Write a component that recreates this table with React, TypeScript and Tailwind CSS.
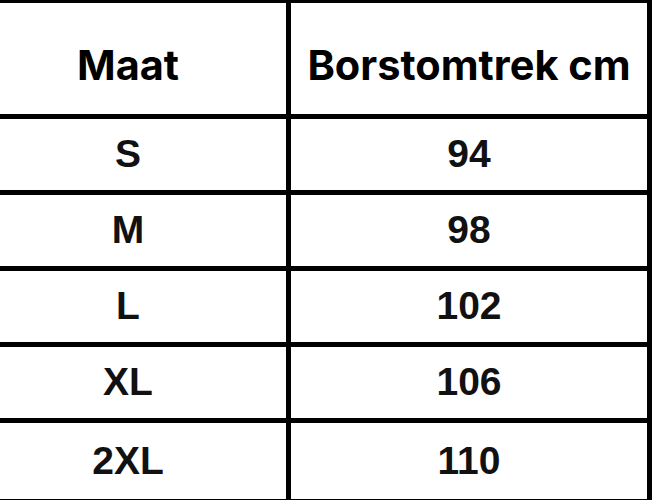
import React from "react";

// Size chart rows
const rows = [
  { size: "S", chest: "94" },
  { size: "M", chest: "98" },
  { size: "L", chest: "102" },
  { size: "XL", chest: "106" },
  { size: "2XL", chest: "110" },
];

const App: React.FC = () => {
  return (
    <div className="w-[654px] h-[500px] bg-white overflow-hidden">
      <div className="w-[652px] border-t-[3px] border-r-[5px] border-b-[5px] border-black">
        {/* Header */}
        <div className="flex h-[116px] border-b-[5px] border-black font-[Inter] font-bold text-[41.5px] text-black">
          <div className="w-[291px] border-r-[5px] border-black flex items-center justify-center pr-[30px] pt-[14px]">
            Maat
          </div>
          <div className="flex-1 flex items-center justify-center pt-[14px]">
            Borstomtrek cm
          </div>
        </div>

        {/* Body rows */}
        {rows.map((row, i) => (
          <div
            key={row.size}
            className={`flex h-[76px] font-['Liberation_Sans',Arial,sans-serif] font-bold text-[39px] text-[#111] ${
              i < rows.length - 1 ? "border-b-[5px] border-black" : ""
            }`}
          >
            <div className="w-[291px] border-r-[5px] border-black flex items-center justify-center pr-[30px]">
              {row.size}
            </div>
            <div className="flex-1 flex items-center justify-center">
              {row.chest}
            </div>
          </div>
        ))}
      </div>
    </div>
  );
};

export default App;
